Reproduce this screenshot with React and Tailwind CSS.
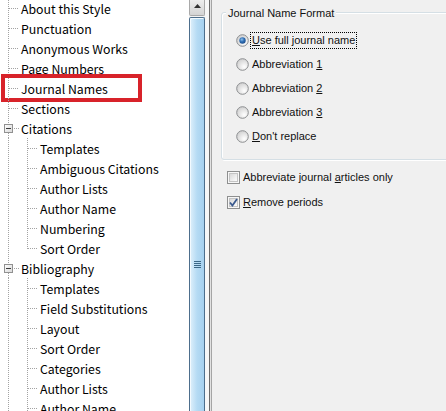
import React from 'react';

const tree = [
    { label: 'About this Style', level: 1 },
    { label: 'Punctuation', level: 1 },
    { label: 'Anonymous Works', level: 1 },
    { label: 'Page Numbers', level: 1 },
    { label: 'Journal Names', level: 1, marked: true },
    { label: 'Sections', level: 1 },
    { label: 'Citations', level: 1, open: true },
    { label: 'Templates', level: 2 },
    { label: 'Ambiguous Citations', level: 2 },
    { label: 'Author Lists', level: 2 },
    { label: 'Author Name', level: 2 },
    { label: 'Numbering', level: 2 },
    { label: 'Sort Order', level: 2, last: true },
    { label: 'Bibliography', level: 1, open: true },
    { label: 'Templates', level: 2 },
    { label: 'Field Substitutions', level: 2 },
    { label: 'Layout', level: 2 },
    { label: 'Sort Order', level: 2 },
    { label: 'Categories', level: 2 },
    { label: 'Author Lists', level: 2 },
    { label: 'Author Name', level: 2 },
    { label: 'Numbering', level: 2 },
];

const dot = { stroke: '#a3a3a3', strokeDasharray: '1 1', shapeRendering: 'crispEdges' };

// dotted connector lines on the left of each tree row
const Connector = ({ item }) => {
    if (item.level === 2) {
        return (
            <svg width="39" height="20" className="shrink-0">
                <line x1="8.5" y1="0" x2="8.5" y2="20" {...dot} />
                <line x1="27.5" y1="0" x2="27.5" y2={item.last ? 11 : 20} {...dot} />
                <line x1="28" y1="10.5" x2="38" y2="10.5" {...dot} />
            </svg>
        );
    }
    if (item.open) {
        return (
            <svg width="20" height="20" className="shrink-0">
                <defs>
                    <linearGradient id="boxfill" x1="0" y1="0" x2="1" y2="1">
                        <stop offset="0" stopColor="#ffffff" />
                        <stop offset="1" stopColor="#d8d8d8" />
                    </linearGradient>
                </defs>
                <line x1="8.5" y1="0" x2="8.5" y2="6" {...dot} />
                <line x1="8.5" y1="15" x2="8.5" y2="20" {...dot} />
                <rect x="4.5" y="6.5" width="8" height="8" fill="url(#boxfill)" stroke="#919191" />
                <line x1="6" y1="10.5" x2="11" y2="10.5" stroke="#3d3d3d" shapeRendering="crispEdges" />
                <line x1="14" y1="10.5" x2="19" y2="10.5" {...dot} />
            </svg>
        );
    }
    return (
        <svg width="20" height="20" className="shrink-0">
            <line x1="8.5" y1="0" x2="8.5" y2="20" {...dot} />
            <line x1="9" y1="10.5" x2="19" y2="10.5" {...dot} />
        </svg>
    );
};

const Radio = ({ checked }) => (
    <svg width="13" height="13" className="shrink-0">
        <defs>
            <radialGradient id="rfill" cx="0.65" cy="0.7" r="0.7">
                <stop offset="0" stopColor="#ffffff" />
                <stop offset="1" stopColor="#d2d2d2" />
            </radialGradient>
            <radialGradient id="rdot" cx="0.4" cy="0.35" r="0.7">
                <stop offset="0" stopColor="#8fc1ec" />
                <stop offset="0.5" stopColor="#2f6eb4" />
                <stop offset="1" stopColor="#1c4d8a" />
            </radialGradient>
        </defs>
        <circle cx="6.5" cy="6.5" r="5.8" fill="url(#rfill)" stroke="#8c8e90" strokeWidth="1" />
        {checked && <circle cx="6.5" cy="6.5" r="3.2" fill="url(#rdot)" />}
    </svg>
);

const Check = ({ checked }) => (
    <svg width="13" height="13" className="shrink-0">
        <defs>
            <linearGradient id="cfill" x1="0" y1="0" x2="1" y2="1">
                <stop offset="0" stopColor="#d6d6d6" />
                <stop offset="1" stopColor="#ffffff" />
            </linearGradient>
        </defs>
        <rect x="0.5" y="0.5" width="12" height="12" fill="#f7f7f7" stroke="#8e8f8f" />
        <rect x="2.5" y="2.5" width="8" height="8" fill="url(#cfill)" stroke="#c4c4c4" />
        {checked && (
            <path d="M3 6.5 L5.4 9.5 L10 3" fill="none" stroke="#3b5a8e" strokeWidth="1.8" />
        )}
    </svg>
);

const radios = [
    { label: <><u>U</u>se full journal name</>, checked: true },
    { label: <>Abbreviation <u>1</u></> },
    { label: <>Abbreviation <u>2</u></> },
    { label: <>Abbreviation <u>3</u></> },
    { label: <><u>D</u>on't replace</> },
];

export default function App() {
    return (
        <div className="flex w-[446px] h-[411px] overflow-hidden bg-[#f0f0f0] text-black">
            {/* Tree */}
            <div className="flex w-[209px] shrink-0 bg-white">
                <div className="w-[189px] shrink-0 overflow-hidden [font-family:'Noto_Sans_CJK_SC','Noto_Sans',sans-serif]">
                    <div className="mt-[-2px] flex flex-col">
                        {tree.map((item, i) => (
                            <div key={i} className="relative flex h-[20px] items-center text-[12.3px] leading-none whitespace-nowrap">
                                <Connector item={item} />
                                <span className="pl-[1px] pt-[2px]">{item.label}</span>
                                {item.marked && (
                                    <span className="absolute left-[1px] top-[-4px] w-[141px] h-[28px] border-[4px] border-[#d8232a]" />
                                )}
                            </div>
                        ))}
                    </div>
                </div>
                {/* Scrollbar */}
                <div className="flex w-[16px] shrink-0 flex-col bg-[#f4f4f4]">
                    <div className="flex h-[16px] shrink-0 justify-center border border-t-0 border-[#a9a9a9] rounded-b-[2px] bg-gradient-to-b from-[#eeeeee] to-[#d4d4d4] pt-[4px]">
                        <svg width="7" height="4"><path d="M0 4 L3.5 0 L7 4 Z" fill="#333" /></svg>
                    </div>
                    <div className="mt-[1px] flex flex-1 items-start justify-center rounded-t-[2px] border border-b-0 border-[#4d6e8c] bg-gradient-to-r from-[#dff0fb] via-[#b5dbf4] to-[#a6d0ee] shadow-[inset_1px_1px_0_#f2faff]">
                        <svg width="7" height="9" className="mt-[242px]">
                            <line x1="0" y1="1.5" x2="7" y2="1.5" stroke="#3c6887" />
                            <line x1="0" y1="3.5" x2="7" y2="3.5" stroke="#3c6887" />
                            <line x1="0" y1="5.5" x2="7" y2="5.5" stroke="#3c6887" />
                            <line x1="0" y1="7.5" x2="7" y2="7.5" stroke="#3c6887" />
                        </svg>
                    </div>
                </div>
                <div className="w-[4px] bg-[#f7f7f7]" />
            </div>
            <div className="w-px shrink-0 bg-[#6a6a6a]" />
            <div className="w-px shrink-0 bg-[#e2e2e2]" />
            <div className="w-px shrink-0 bg-[#a5a5a5]" />

            {/* Options panel */}
            <div className="flex-1 overflow-hidden pl-[9px] pt-[12px] text-[11px] text-[#111] [font-family:'Liberation_Sans',Arial,sans-serif]">
                <div className="relative mr-[-20px] h-[148px] rounded-[3px] border border-[#d5dfe5] shadow-[1px_1px_0_#ffffff,inset_1px_1px_0_#ffffff]">
                    <span className="absolute left-[4px] top-[-8px] bg-[#f0f0f0] px-[2px] leading-[16px]">Journal Name Format</span>
                    <div className="flex flex-col pl-[14px] pt-[15px]">
                        {radios.map((r, i) => (
                            <div key={i} className="flex h-[24px] items-center gap-[1px]">
                                <Radio checked={r.checked} />
                                <span className={`border px-[1px] leading-[15px] ${r.checked ? 'border-dotted border-black' : 'border-transparent'}`}>
                                    {r.label}
                                </span>
                            </div>
                        ))}
                    </div>
                </div>
                <div className="mt-[5px] flex flex-col pl-[6px]">
                    <div className="flex h-[25px] items-center gap-[3px]">
                        <Check />
                        <span>Abbreviate journal <u>a</u>rticles only</span>
                    </div>
                    <div className="flex h-[25px] items-center gap-[3px]">
                        <Check checked />
                        <span><u>R</u>emove periods</span>
                    </div>
                </div>
            </div>
        </div>
    );
}
